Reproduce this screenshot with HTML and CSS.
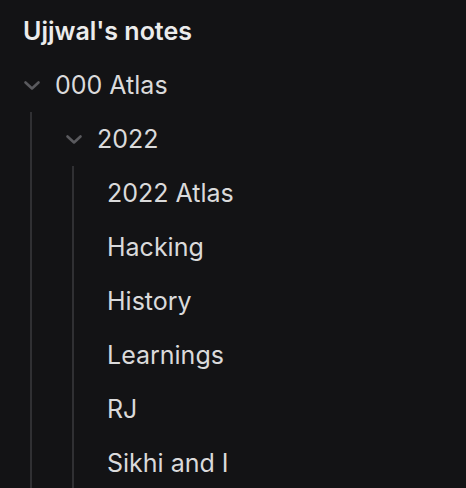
FILE: index.html
```html
<!DOCTYPE html>
<html>
<head>
	<title>Ujjwal's notes</title>
	<link rel="stylesheet" href="styles.css">
</head>
<body>
	<div class="tree">
		<div class="vault-title">Ujjwal's notes</div>

		<div class="folder">
			<div class="row">
				<svg class="chevron" viewBox="0 0 18 11"><path d="M2.5 2.5 L9 8.5 L15.5 2.5"/></svg>
				<span class="name">000 Atlas</span>
			</div>
			<div class="children">
				<div class="folder">
					<div class="row">
						<svg class="chevron" viewBox="0 0 18 11"><path d="M2.5 2.5 L9 8.5 L15.5 2.5"/></svg>
						<span class="name">2022</span>
					</div>
					<div class="children">
						<div class="row file"><span class="name">2022 Atlas</span></div>
						<div class="row file"><span class="name">Hacking</span></div>
						<div class="row file"><span class="name">History</span></div>
						<div class="row file"><span class="name">Learnings</span></div>
						<div class="row file"><span class="name">RJ</span></div>
						<div class="row file"><span class="name">Sikhi and I</span></div>
					</div>
				</div>
			</div>
		</div>
	</div>
</body>
</html>
```

FILE: styles.css
```css
html, body {
	margin: 0;
	height: 100%;
	background: #131315;
	overflow: hidden;
}
.tree {
	padding: 4px 0 0 23px;
	font-family: Inter, "Noto Sans", sans-serif;
	color: #dadadb;
}
.vault-title {
	height: 54px;
	display: flex;
	align-items: center;
	font-size: 25px;
	font-weight: 600;
	color: #ececec;
}
.row {
	height: 54px;
	display: flex;
	align-items: center;
	gap: 14px;
	font-size: 25px;
	white-space: nowrap;
}
.chevron {
	width: 18px;
	height: 11px;
	flex: none;
	fill: none;
	stroke: #5a5a5e;
	stroke-width: 2.6;
	stroke-linecap: round;
	stroke-linejoin: round;
}
.children {
	margin-left: 7px;
	padding-left: 33px;
	border-left: 2px solid #303033;
}
```
